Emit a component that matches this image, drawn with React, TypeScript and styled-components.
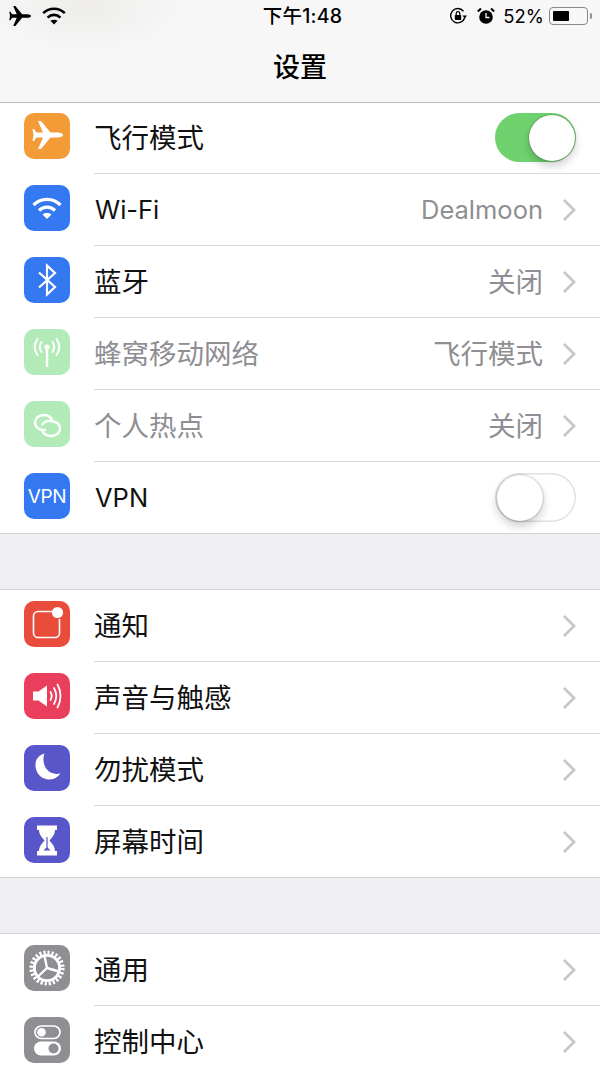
import React from "react";
import styled, { createGlobalStyle } from "styled-components";

const FONT = `Inter, "Noto Sans CJK SC", sans-serif`;

const GlobalStyle = createGlobalStyle`
  html, body {
    margin: 0;
    padding: 0;
    background: #efeff4;
    font-family: ${FONT};
  }
`;

const Screen = styled.div`
  width: 600px;
  height: 1067px;
  overflow: hidden;
  background: #efeff4;
  color: #000;
`;

const Header = styled.header`
  position: relative;
  z-index: 1;
  box-sizing: border-box;
  height: 103px;
  display: flex;
  flex-direction: column;
  border-bottom: 1px solid #bcbcbe;
  background:
    radial-gradient(ellipse 100px 45px at 85px 8px, #eeedeb 0%, rgba(238, 237, 235, 0) 100%),
    #f7f7f7;
`;

const StatusBar = styled.div`
  height: 32px;
  padding: 0 12px 0 8px;
  display: grid;
  grid-template-columns: 1fr auto 1fr;
  align-items: center;
`;

const StatusLeft = styled.div`
  display: flex;
  align-items: center;
  gap: 10px;
`;

const StatusRight = styled.div`
  display: flex;
  align-items: center;
  justify-content: flex-end;
  color: #000;
`;

const StatusGlyph = styled.svg`
  width: 24px;
  height: 20px;
  color: #000;
`;

const SmallGlyph = styled.svg`
  width: 18px;
  height: 18px;
  margin-right: 10px;
  color: #000;
`;

const Clock = styled.div`
  padding-left: 9px;
  font-size: 19.5px;
  letter-spacing: 0.2px;
  font-weight: 500;
  line-height: 32px;
`;

const Percent = styled.div`
  font-size: 18.5px;
  line-height: 32px;
  margin: 0 5px 0 -2px;
`;

const Battery = styled.div`
  position: relative;
  box-sizing: border-box;
  width: 39px;
  height: 18px;
  padding: 3px;
  border: 1px solid #8a8a8a;
  border-radius: 4px;
  &::after {
    content: "";
    position: absolute;
    right: -5px;
    top: 5px;
    width: 2px;
    height: 6px;
    border-radius: 0 2px 2px 0;
    background: #8a8a8a;
  }
`;

const BatteryLevel = styled.div<{ $level: number }>`
  width: ${(p) => p.$level}%;
  height: 100%;
  border-radius: 1px;
  background: #000;
`;

const Title = styled.h1`
  margin: 2px 0 0;
  text-align: center;
  font-size: 27px;
  font-weight: 500;
  line-height: 68px;
`;

const Group = styled.section<{ $first: boolean }>`
  margin-top: ${(p) => (p.$first ? "-1px" : "55px")};
  background: #fff;
  border-top: ${(p) => (p.$first ? "none" : "1px solid #d3d3d6")};
  border-bottom: 1px solid #d3d3d6;
`;

const Row = styled.div`
  display: flex;
  align-items: flex-start;
  gap: 24px;
  padding-left: 24px;
  height: 72px;
  &:last-child {
    height: 71px;
  }
`;

const IconTile = styled.div<{ $color: string }>`
  flex-shrink: 0;
  width: 46px;
  height: 46px;
  margin-top: 11px;
  display: flex;
  align-items: center;
  justify-content: center;
  border-radius: 10px;
  color: #fff;
  background: ${(p) => p.$color};
`;

const IconSvg = styled.svg`
  width: 46px;
  height: 46px;
  display: block;
`;

const VpnMark = styled.span`
  font-size: 19px;
  letter-spacing: -0.3px;
  color: #fff;
`;

const Body = styled.div`
  flex: 1;
  box-sizing: border-box;
  height: 100%;
  display: flex;
  align-items: center;
  padding-right: 24px;
  border-bottom: 1px solid #d9d9dc;
  ${Row}:last-child & {
    border-bottom: none;
  }
`;

// CJK text sits a little higher than the latin text and runs larger
const Label = styled.span<{ $disabled?: boolean; $latin: boolean }>`
  flex: 1;
  font-size: ${(p) => (p.$latin ? "25.5px" : "27.5px")};
  margin: ${(p) => (p.$latin ? "0 0 0 1px" : "0 0 4px")};
  color: ${(p) => (p.$disabled ? "#8e8e93" : "#111")};
`;

const Value = styled.span<{ $latin: boolean }>`
  font-size: ${(p) => (p.$latin ? "25.5px" : "27.5px")};
  margin-bottom: ${(p) => (p.$latin ? "0" : "4px")};
  color: #8e8e93;
  margin-right: 19px;
`;

const ChevronSvg = styled.svg`
  width: 14px;
  height: 24px;
  color: #c7c7cc;
`;

const Toggle = styled.div<{ $on: boolean }>`
  box-sizing: border-box;
  width: 81px;
  height: 49px;
  padding: 1.5px;
  display: flex;
  justify-content: ${(p) => (p.$on ? "flex-end" : "flex-start")};
  border-radius: 25px;
  background: ${(p) => (p.$on ? "#6fd26f" : "#fff")};
  box-shadow: ${(p) => (p.$on ? "none" : "inset 0 0 0 1.5px #e2e2e2")};
`;

const Knob = styled.div`
  width: 46px;
  height: 46px;
  border-radius: 50%;
  background: #fff;
  box-shadow: 0 5px 10px rgba(0, 0, 0, 0.2), 0 0 2px rgba(0, 0, 0, 0.4);
`;

const PlaneShape = () => (
  <path d="M39 22C39 20.5 36 19.5 34 19.5H26.5L17 8H14L19 19.5H12.5L10 16H8.5L9.5 22L8.5 28H10L12.5 24.5H19L14 36H17L26.5 24.5H34C36 24.5 39 23.5 39 22Z" fill="currentColor" />
);

const WifiShape = () => (
  <g fill="none" stroke="currentColor" strokeWidth="3.2">
    <path d="M9.5 20C17 12.5 29 12.5 36.5 20" />
    <path d="M15 25.5C19.5 21 26.5 21 31 25.5" />
    <path d="M18.5 29.5C21 27.6 25 27.6 27.5 29.5L23 34Z" fill="currentColor" stroke="none" />
  </g>
);

const BluetoothShape = () => (
  <path d="M15 15.5L31 30L23 37.5V8.5L31 16L15 30.5" fill="none" stroke="currentColor" strokeWidth="2.2" />
);

const CellShape = () => (
  <g fill="none" stroke="currentColor" strokeWidth="2" strokeLinecap="round">
    <circle cx="23" cy="18" r="2.6" fill="currentColor" stroke="none" />
    <path d="M23 20V37" strokeWidth="2.4" />
    <path d="M17.5 23C15.5 20 15.5 16 17.5 13" />
    <path d="M28.5 13C30.5 16 30.5 20 28.5 23" />
    <path d="M13.5 26C10 21 10 15 13.5 10" />
    <path d="M32.5 10C36 15 36 21 32.5 26" />
  </g>
);

const HotspotShape = () => (
  <g fill="none" stroke="currentColor" strokeWidth="2.4" strokeLinecap="round">
    <path d="M21 29C15 29.5 11 26 11 21.5C11 17 15 14 19.5 14C24 14 27 16 28.5 19.5" />
    <path d="M18.5 23.5C20 20.5 23 19.5 27 20C32 20.5 36 23 36 27.5C36 32 32 35 27.5 35C23 35 19.5 33 18 29.5" />
  </g>
);

const BellShape = () => (
  <g fill="none" stroke="currentColor">
    <path d="M28 10.5H14C11.5 10.5 9.5 12.5 9.5 15V32C9.5 34.5 11.5 36.5 14 36.5H31C33.5 36.5 35.5 34.5 35.5 32V18" strokeWidth="1.6" />
    <circle cx="33.5" cy="11.5" r="5.6" fill="currentColor" stroke="none" />
  </g>
);

const SoundShape = () => (
  <g fill="none" stroke="currentColor" strokeLinecap="round">
    <path d="M9 18.5H14.5L23 12.5V33.5L14.5 27.5H9Z" fill="currentColor" stroke="none" />
    <path d="M26.5 19C28 21.5 28 24.5 26.5 27" strokeWidth="1.8" />
    <path d="M30 15C32.8 20 32.8 26 30 31" strokeWidth="1.8" />
    <path d="M33.5 11.5C37.5 18.5 37.5 27.5 33.5 34.5" strokeWidth="1.8" />
  </g>
);

const MoonShape = () => (
  <path d="M20.5 8.5C13.5 10.5 11 16 11.5 21.5C12.2 29.5 19 35 26 34.5C30.5 34.2 34 32 36.5 28.5C29.5 30 23.5 27 21 21.5C19 17 19 12.5 20.5 8.5Z" fill="currentColor" />
);

const HourglassShape = () => (
  <g>
    <path d="M13 8.5H33V13H31C31 17.5 28 20.5 25.5 23.5C28 26.5 31 29.5 31 34H33V38.5H13V34H15C15 29.5 18 26.5 20.5 23.5C18 20.5 15 17.5 15 13H13Z" fill="currentColor" />
    <path d="M22.4 20H23.6V30.5L26.5 33.5H19.5L22.4 30.5Z" fill="#5856c9" />
  </g>
);

const GearShape = () => (
  <g fill="none" stroke="currentColor">
    <circle cx="23" cy="23" r="15.4" strokeWidth="4.4" strokeDasharray="2.2 1.83" />
    <circle cx="23" cy="23" r="12.6" strokeWidth="2.8" />
    <path d="M23 23L20.5 11M23 23L35 26.5M23 23L14 31.5" strokeWidth="2.4" />
  </g>
);

const SwitchesShape = () => (
  <g fill="none">
    <rect x="11" y="9" width="25" height="12.5" rx="6.25" stroke="currentColor" strokeWidth="1.7" />
    <circle cx="17.5" cy="15.25" r="4.3" fill="currentColor" />
    <rect x="10" y="24.5" width="27" height="14" rx="7" fill="currentColor" />
    <circle cx="29.5" cy="31.5" r="5" fill="#8e8e93" />
  </g>
);

const Glyph = ({ children }: { children: React.ReactNode }) => (
  <IconSvg viewBox="0 0 46 46">{children}</IconSvg>
);

const Chevron = () => (
  <ChevronSvg viewBox="0 0 14 24">
    <path d="M2 2L12 12L2 22" fill="none" stroke="currentColor" strokeWidth="2.8" />
  </ChevronSvg>
);

const isLatin = (text: string) => /^[\x00-\x7f]+$/.test(text);

interface ISetting {
  label: string;
  color: string;
  icon: React.ReactNode;
  value?: string;
  toggle?: boolean;
  disabled?: boolean;
}

const GROUPS: ISetting[][] = [
  [
    { label: "飞行模式", color: "#f39c37", icon: <Glyph><PlaneShape /></Glyph>, toggle: true },
    { label: "Wi-Fi", color: "#3478f2", icon: <Glyph><WifiShape /></Glyph>, value: "Dealmoon" },
    { label: "蓝牙", color: "#3478f2", icon: <Glyph><BluetoothShape /></Glyph>, value: "关闭" },
    { label: "蜂窝移动网络", color: "#b3ebb8", icon: <Glyph><CellShape /></Glyph>, value: "飞行模式", disabled: true },
    { label: "个人热点", color: "#b3ebb8", icon: <Glyph><HotspotShape /></Glyph>, value: "关闭", disabled: true },
    { label: "VPN", color: "#3478f2", icon: <VpnMark>VPN</VpnMark>, toggle: false },
  ],
  [
    { label: "通知", color: "#ea4c3c", icon: <Glyph><BellShape /></Glyph> },
    { label: "声音与触感", color: "#ea3f5c", icon: <Glyph><SoundShape /></Glyph> },
    { label: "勿扰模式", color: "#5856c9", icon: <Glyph><MoonShape /></Glyph> },
    { label: "屏幕时间", color: "#5856c9", icon: <Glyph><HourglassShape /></Glyph> },
  ],
  [
    { label: "通用", color: "#8e8e93", icon: <Glyph><GearShape /></Glyph> },
    { label: "控制中心", color: "#8e8e93", icon: <Glyph><SwitchesShape /></Glyph> },
  ],
];

const App = () => {
  return (
    <Screen>
      <GlobalStyle />
      <Header>
        <StatusBar>
          <StatusLeft>
            <StatusGlyph viewBox="8 8 31 28"><PlaneShape /></StatusGlyph>
            <StatusGlyph viewBox="8 12 30 23"><WifiShape /></StatusGlyph>
          </StatusLeft>
          <Clock>下午1:48</Clock>
          <StatusRight>
            <SmallGlyph viewBox="0 0 18 18">
              <path d="M15.8 10.5A7.2 7.2 0 1 1 14.5 4.2" fill="none" stroke="currentColor" strokeWidth="1.4" />
              <path d="M13.5 8.5H18L15.8 11.5Z" fill="currentColor" />
              <rect x="5.8" y="8" width="6.4" height="5" rx="0.8" fill="currentColor" />
              <path d="M7.2 8V6.5A1.8 1.8 0 0 1 10.8 6.5V8" fill="none" stroke="currentColor" strokeWidth="1.2" />
            </SmallGlyph>
            <SmallGlyph viewBox="0 0 18 18">
              <circle cx="9" cy="10" r="6.8" fill="currentColor" />
              <path d="M9 6V10.5H12.5" fill="none" stroke="#f7f7f7" strokeWidth="1.3" />
              <path d="M0.8 4.5L4 1.5M17.2 4.5L14 1.5" stroke="currentColor" strokeWidth="2" />
            </SmallGlyph>
            <Percent>52%</Percent>
            <Battery>
              <BatteryLevel $level={52} />
            </Battery>
          </StatusRight>
        </StatusBar>
        <Title>设置</Title>
      </Header>
      {GROUPS.map((rows, i) => (
        <Group key={i} $first={i === 0}>
          {rows.map((row) => (
            <Row key={row.label}>
              <IconTile $color={row.color}>{row.icon}</IconTile>
              <Body>
                <Label $disabled={row.disabled} $latin={isLatin(row.label)}>{row.label}</Label>
                {row.value && <Value $latin={isLatin(row.value)}>{row.value}</Value>}
                {row.toggle === undefined ? (
                  <Chevron />
                ) : (
                  <Toggle $on={row.toggle}>
                    <Knob />
                  </Toggle>
                )}
              </Body>
            </Row>
          ))}
        </Group>
      ))}
    </Screen>
  );
};

export default App;
